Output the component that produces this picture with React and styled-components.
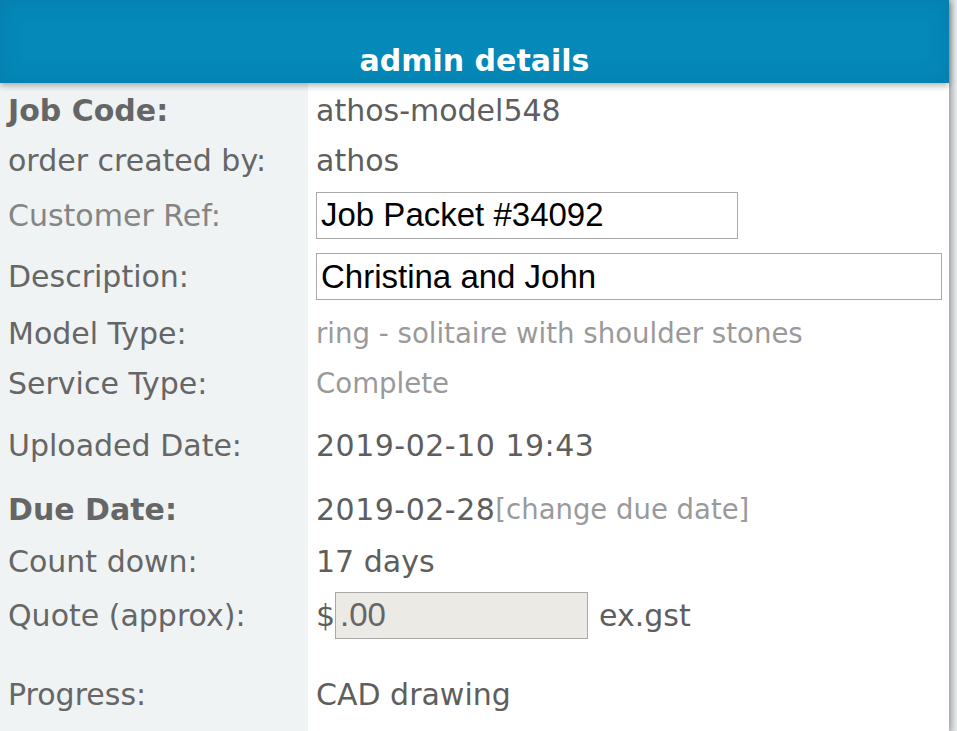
import React from 'react'
import styled, { createGlobalStyle } from 'styled-components'

const GlobalStyle = createGlobalStyle`
    html, body {
        margin: 0;
        padding: 0;
        background: #e7ebec;
        overflow: hidden;
    }
    * {
        box-sizing: border-box;
    }
`

const Page = styled.div`
    display: flex;
    width: 957px;
    height: 731px;
    background: #e7ebec;
`

const Panel = styled.section`
    flex: 0 0 949px;
    display: flex;
    flex-direction: column;
    background: #fff;
    box-shadow: 2px 0 6px rgba(0, 0, 0, 0.28);
    font-family: 'DejaVu Sans', Verdana, sans-serif;
    position: relative;
    z-index: 1;
`

const Header = styled.header`
    height: 83px;
    display: flex;
    align-items: flex-end;
    justify-content: center;
    padding-bottom: 5px;
    background: #0589b9;
    box-shadow: inset 0 0 24px rgba(0, 40, 80, 0.12), 0 3px 6px rgba(0, 0, 0, 0.28);
    position: relative;
    z-index: 2;
`

const Title = styled.h2`
    margin: 0;
    color: #fff;
    font-size: 30px;
    font-weight: bold;
`

const Details = styled.div`
    flex: 1;
    display: grid;
    grid-template-columns: 308px 1fr;
    align-content: start;
    padding-top: 2px;
    background: linear-gradient(to right, #eff3f4 0, #eff3f4 308px, #fff 308px);
`

const Label = styled.div`
    height: ${p => p.h || 50}px;
    display: flex;
    align-items: center;
    padding-left: 8px;
    font-size: 30px;
    font-weight: ${p => (p.strong ? 'bold' : 'normal')};
    color: ${p => (p.muted ? '#858585' : '#666')};
    white-space: nowrap;
`

const Value = styled.div`
    height: ${p => p.h || 50}px;
    display: flex;
    align-items: center;
    padding-left: 8px;
    font-size: ${p => (p.muted ? 27.6 : 30)}px;
    color: ${p => (p.muted ? '#9a9a9a' : '#5e5e5e')};
    white-space: nowrap;
`

const DateText = styled.span`
    letter-spacing: 0.5px;
`

const TextInput = styled.input`
    width: ${p => p.w}px;
    height: 47px;
    padding: 0 4px;
    border: 1px solid #a9a9a9;
    background: ${p => (p.readOnly ? '#ebeae4' : '#fff')};
    color: ${p => (p.readOnly ? '#666' : '#000')};
    font-family: 'Liberation Sans', Arial, sans-serif;
    font-size: 33px;
    outline: none;
`

const ChangeLink = styled.a`
    font-size: 27.5px;
    color: #9a9a9a;
    text-decoration: none;
    cursor: pointer;
`

const Suffix = styled.span`
    margin-left: 11px;
`

const Edge = styled.div`
    flex: 1;
    background: linear-gradient(to right, #d3d7d8, #e7ebec);
`

const rows = [
    { label: 'Job Code:', strong: true, value: 'athos-model548' },
    { label: 'order created by:', value: 'athos' },
    { label: 'Customer Ref:', muted: true, input: 'Job Packet #34092', w: 422, h: 60 },
    { label: 'Description:', input: 'Christina and John', w: 626, h: 63 },
    { label: 'Model Type:', value: 'ring - solitaire with shoulder stones', mutedValue: true },
    { label: 'Service Type:', value: 'Complete', mutedValue: true },
    { label: 'Uploaded Date:', date: '2019-02-10 19:43', h: 74 },
    { label: 'Due Date:', strong: true, due: '2019-02-28', h: 54 },
    { label: 'Count down:', value: '17 days' },
    { label: 'Quote (approx):', quote: '.00', h: 58 },
    { spacer: true, h: 25 },
    { label: 'Progress:', value: 'CAD drawing' }
]

function renderValue(row) {
    if (row.input) {
        return <TextInput w={row.w} defaultValue={row.input} />
    }
    if (row.date) {
        return <DateText>{row.date}</DateText>
    }
    if (row.due) {
        return (
            <>
                <DateText>{row.due}</DateText>
                <ChangeLink>[change due date]</ChangeLink>
            </>
        )
    }
    if (row.quote) {
        return (
            <>
                $
                <TextInput w={253} readOnly defaultValue={row.quote} />
                <Suffix>ex.gst</Suffix>
            </>
        )
    }
    return row.value
}

export default function App() {
    return (
        <Page>
            <GlobalStyle />
            <Panel>
                <Header>
                    <Title>admin details</Title>
                </Header>
                <Details>
                    {rows.map((row, i) => (
                        <React.Fragment key={i}>
                            <Label h={row.h} strong={row.strong} muted={row.muted}>
                                {row.label}
                            </Label>
                            <Value h={row.h} muted={row.mutedValue}>
                                {!row.spacer && renderValue(row)}
                            </Value>
                        </React.Fragment>
                    ))}
                </Details>
            </Panel>
            <Edge />
        </Page>
    )
}
